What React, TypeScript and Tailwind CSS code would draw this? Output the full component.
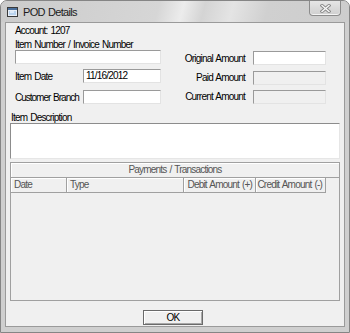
import React from "react";

const TextBox: React.FC<{ width: string; value?: string; disabled?: boolean }> = ({
  width,
  value = "",
  disabled = false,
}) => (
  <div
    className={
      (disabled ? "bg-[#f0f0f0] " : "bg-white ") +
      width +
      " h-[14px] shrink-0 border border-t-[#9a9a9a] border-l-[#9a9a9a] border-b-[#e3e3e3] border-r-[#e3e3e3] pl-[2px] text-[10px] leading-[12px]"
    }
  >
    {value}
  </div>
);

const App: React.FC = () => {
  return (
    <div className="w-[350px] h-[333px] flex flex-col overflow-hidden whitespace-nowrap rounded-t-[7px] border border-[#858585] bg-[#cfcfcf] text-black font-['Liberation_Sans',Arial,sans-serif]">
      {/* title bar */}
      <div className="h-[21px] flex items-center pl-[6px] bg-[linear-gradient(105deg,#cbcbcb_0%,#d6d6d6_45%,#ececec_52%,#d4d4d4_58%,#e4e4e4_66%,#d0d0d0_76%,#cdcdcd_100%)]">
        <svg width="11" height="10" viewBox="0 0 11 10">
          <rect x="0.5" y="0.5" width="10" height="9" fill="#e8eef6" stroke="#3a3a3a" />
          <rect x="1" y="1" width="9" height="2" fill="#4a6f9c" />
          <path d="M2 4 L9 4 L9 8 L2 8 Z" fill="#b9d3ee" />
          <path d="M3 5 L7 5" stroke="#ffffff" strokeWidth="1" />
        </svg>
        <span className="ml-[5px] text-[11px] leading-[14px] tracking-[-0.7px] [word-spacing:1px] text-[#1c1c1c]">POD Details</span>
        <div className="self-start ml-auto mr-[8px] w-[32px] h-[15px] flex items-center justify-center rounded-b-[4px] border border-t-0 border-[#8c8c8c] bg-[linear-gradient(#e6e6e6,#cfcfcf)] shadow-[inset_0_-1px_0_#f4f4f4]">
          <svg width="11" height="9" viewBox="0 0 11 9">
            <path d="M2 1.5 L9 7.5 M9 1.5 L2 7.5" stroke="#8a8a8a" strokeWidth="3.2" strokeLinecap="square" />
            <path d="M2 1.5 L9 7.5 M9 1.5 L2 7.5" stroke="#f7f7f7" strokeWidth="1.4" strokeLinecap="square" />
          </svg>
        </div>
      </div>

      {/* client area */}
      <div className="flex-1 mx-[4px] mb-[5px] flex flex-col border border-[#9a9a9a] bg-[#f0f0f0] text-[10px] tracking-[-0.8px] [word-spacing:1px]">
        <div className="flex pl-[9px] pt-[1px]">
          <div className="w-[146px] flex flex-col">
            <div className="h-[14px] leading-[14px]">Account: 1207</div>
            <div className="h-[12px] leading-[14px]">Item Number / Invoice Number</div>
            <TextBox width="w-[146px]" />
            <div className="mt-[4px] flex items-center">
              <span className="w-[68px] leading-[14px] pt-[2px]">Item Date</span>
              <TextBox width="w-[78px]" value="11/16/2012" />
            </div>
            <div className="mt-[5px] flex items-center">
              <span className="w-[68px] leading-[14px] pt-[2px] tracking-[-1px]">Customer Branch</span>
              <TextBox width="w-[78px]" />
            </div>
          </div>
          <div className="pt-[26px] flex flex-col">
            <div className="flex items-center">
              <span className="w-[84px] text-right leading-[14px] pt-[2px]">Original Amount</span>
              <div className="ml-[8px]">
                <TextBox width="w-[73px]" />
              </div>
            </div>
            <div className="mt-[4px] flex items-center">
              <span className="w-[84px] text-right leading-[14px] pt-[1px]">Paid Amount</span>
              <div className="ml-[8px]">
                <TextBox width="w-[73px]" disabled />
              </div>
            </div>
            <div className="mt-[5px] flex items-center">
              <span className="w-[84px] text-right leading-[14px]">Current Amount</span>
              <div className="ml-[8px]">
                <TextBox width="w-[73px]" disabled />
              </div>
            </div>
          </div>
        </div>

        <div className="px-[4px] mt-[6px] flex flex-col">
          <div className="h-[12px] leading-[14px] pl-[1px]">Item Description</div>
          <div className="h-[36px] bg-white border border-t-[#8c8c8c] border-l-[#8c8c8c] border-b-[#e6e6e6] border-r-[#e6e6e6]" />

          {/* payments grid */}
          <div className="mt-[3px] h-[139px] flex flex-col border border-[#a0a0a0] bg-[#f0f0f0] text-[#555555]">
            <div className="h-[15px] leading-[14px] text-center border-b border-[#a0a0a0] shadow-[inset_1px_1px_0_#ffffff]">
              Payments / Transactions
            </div>
            <div className="flex h-[15px] leading-[14px]">
              <div className="w-[56px] pl-[3px] border-r border-b border-[#a0a0a0] shadow-[inset_1px_1px_0_#ffffff]">Date</div>
              <div className="w-[117px] pl-[3px] border-r border-b border-[#a0a0a0] shadow-[inset_1px_1px_0_#ffffff]">Type</div>
              <div className="w-[72px] pr-[3px] text-right border-r border-b border-[#a0a0a0] shadow-[inset_1px_1px_0_#ffffff]">Debit Amount (+)</div>
              <div className="w-[70px] pr-[3px] text-right border-r border-b border-[#a0a0a0] shadow-[inset_1px_1px_0_#ffffff]">Credit Amount (-)</div>
            </div>
          </div>

          <div className="mt-[9px] flex">
            <button className="ml-[133px] w-[60px] h-[15px] text-[10px] leading-[13px] border border-[#6a6a6a] bg-[#f0f0f0] shadow-[inset_1px_1px_0_#ffffff,inset_-1px_-1px_0_#a8a8a8]">
              OK
            </button>
          </div>
        </div>
      </div>
    </div>
  );
};

export default App;
